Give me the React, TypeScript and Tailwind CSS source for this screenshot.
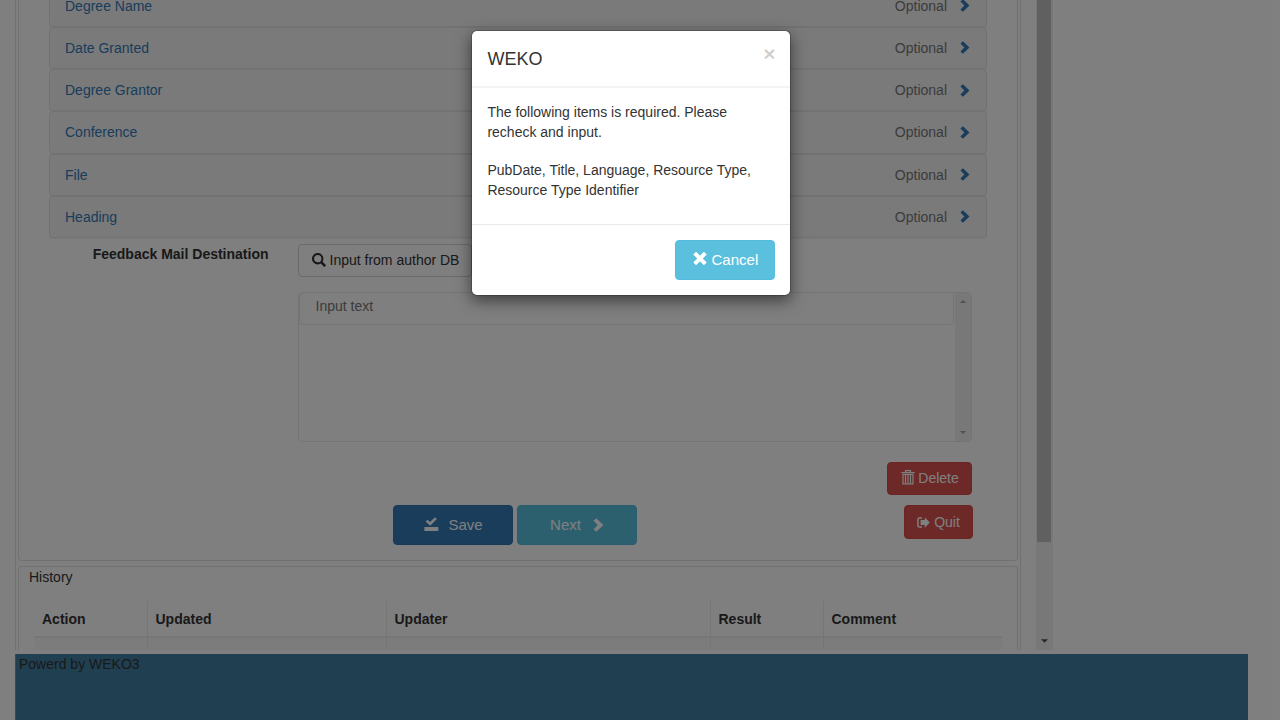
import React from "react";

const fields = ["Degree Name", "Date Granted", "Degree Grantor", "Conference", "File", "Heading"];

const columns = [
  { name: "Action", cell: "w-[113px]" },
  { name: "Updated", cell: "w-[239px]" },
  { name: "Updater", cell: "w-[324px]" },
  { name: "Result", cell: "w-[113px]" },
  { name: "Comment", cell: "flex-1" },
];

function Chevron({ className }: { className: string }) {
  return (
    <svg viewBox="0 0 10 13" fill="currentColor" className={className}>
      <path d="M2.9 0.2 9.5 6.5 2.9 12.8 0.4 10.4 4.4 6.5 0.4 2.6z" />
    </svg>
  );
}

function SearchIcon() {
  return (
    <svg viewBox="0 0 14 14" className="h-3.5 w-3.5" fill="none" stroke="currentColor">
      <circle cx="5.7" cy="5.7" r="4.7" strokeWidth="2.1" />
      <path d="M9.2 9.2l4 4" strokeWidth="2.6" />
    </svg>
  );
}

function TrashIcon() {
  return (
    <svg viewBox="0 0 14 15" className="mb-px h-[15px] w-3.5" fill="none" stroke="currentColor">
      <path d="M4.5 2V.6h5V2" strokeWidth="1.1" />
      <path d="M.3 2.6h13.4" strokeWidth="1.2" />
      <path d="M2 4v9.8h10V4M1.5 4.4h11" strokeWidth="1.2" />
      <path d="M4.5 5v8M7 5v8M9.5 5v8" strokeWidth="1.2" />
    </svg>
  );
}

function QuitIcon() {
  return (
    <svg viewBox="0 0 13 11" className="h-[11px] w-[13px]">
      <path d="M5 1H2.4Q.9 1 .9 2.5v6Q.9 10 2.4 10H5" fill="none" stroke="currentColor" strokeWidth="1.5" />
      <path d="M3.6 3.1h4.2V.2l5 5.3-5 5.3V7.9H3.6z" fill="currentColor" />
    </svg>
  );
}

function SaveIcon() {
  return (
    <svg viewBox="0 0 15 14" className="mb-[2px] h-3.5 w-[15px]" fill="currentColor">
      <path d="M1.6 4.6 3.5 2.7 6 5.1 10.9.2 12.8 2.1 6.2 8.7z" />
      <path d="M.4 10h13.9v4H.4z" />
    </svg>
  );
}

function CrossIcon() {
  return (
    <svg viewBox="0 0 14 13" className="mb-[3px] h-[13px] w-3.5" fill="none" stroke="currentColor">
      <path d="M1.7 1.2l10.6 10.6M12.3 1.2 1.7 11.8" strokeWidth="4" />
    </svg>
  );
}

function Arrow({ down, className }: { down?: boolean; className: string }) {
  return (
    <svg viewBox="0 0 8 4" fill="currentColor" className={className}>
      <path d={down ? "M0 0h8L4 4z" : "M0 4h8L4 0z"} />
    </svg>
  );
}

function ItemForm() {
  return (
    <section className="flow-root h-[561px] rounded-b border border-t-0 border-[#e3e3e3]">
      <div className="mr-[30px] ml-[30px] -mt-[15.5px]">
        {fields.map((name) => (
          <div
            key={name}
            className="flex h-[42.25px] items-center rounded border border-[#e5e5e5] bg-[#f5f5f5] pr-4 pl-[15px] shadow-[0_1px_1px_rgba(0,0,0,0.05)]"
          >
            <span className="flex-1 text-[#337ab7]">{name}</span>
            <span className="mr-[13px] text-[#777]">Optional</span>
            <Chevron className="h-[13px] w-[10px] text-[#337ab7]" />
          </div>
        ))}
      </div>

      <div className="mt-[6px] flex">
        <div className="w-[249.5px] text-right font-bold">Feedback Mail Destination</div>
        <div className="ml-[29.5px] w-[674px]">
          <button className="flex h-[33px] w-[174px] items-center gap-1 rounded border border-[#d4d4d4] pb-[2px] pl-[12.5px]">
            <SearchIcon />
            Input from author DB
          </button>
          <div className="mt-[15px] flex h-[150px] rounded border border-[#e9e9e9]">
            <div className="flex-1">
              <div className="mr-px h-[32px] rounded border border-t-0 border-[#e9e9e9] pt-[3px] pl-[15.5px] text-[#777]">
                Input text
              </div>
            </div>
            <div className="flex w-[16px] flex-col items-center justify-between bg-[#f0f0f0] py-[7px] text-[#a0a0a0]">
              <Arrow className="h-[3px] w-[6px]" />
              <Arrow down className="h-[3px] w-[6px]" />
            </div>
          </div>
        </div>
      </div>

      <div className="mt-5 flex justify-end pr-[45px]">
        <button className="flex h-[33px] w-[85px] items-center justify-center gap-[3px] rounded border border-[#d64a45] bg-[#d9534f] pb-px pl-px text-white">
          <TrashIcon />
          Delete
        </button>
      </div>
      <div className="mt-[10px] flex items-start pr-[44px] pl-[374px]">
        <button className="flex h-10 w-[120px] items-center justify-center gap-[9px] rounded border border-[#3174ae] bg-[#337ab7] pl-px text-[15px] text-white">
          <SaveIcon />
          Save
        </button>
        <button className="ml-1 flex h-10 w-[120px] items-center justify-center gap-[12px] rounded border border-[#50bcdc] bg-[#5bc0de] text-[15px] text-white">
          Next
          <Chevron className="mb-px h-[14px] w-[11px]" />
        </button>
        <button className="ml-auto flex h-[34px] w-[69px] items-center justify-center gap-1 rounded border border-[#d64a45] bg-[#d9534f] text-white">
          <QuitIcon />
          Quit
        </button>
      </div>
    </section>
  );
}

function History() {
  return (
    <section className="mt-[5px] h-[120px] rounded-t border border-b-0 border-[#e3e3e3]">
      <h2 className="pl-[10px]">History</h2>
      <div className="mt-[14px] mr-[15px] ml-[15px]">
        <div className="flex h-[35px] font-bold">
          {columns.map((c, i) => (
            <div key={c.name} className={`${c.cell} pt-2 ${i ? "border-l border-[#ededed] pl-[7.5px]" : "pl-2"}`}>
              {c.name}
            </div>
          ))}
        </div>
        <div className="flex h-10 border-t-2 border-[#eee] bg-[#f9f9f9]">
          {columns.map((c, i) => (
            <div key={c.name} className={`${c.cell} ${i ? "border-l border-[#ededed]" : ""}`} />
          ))}
        </div>
      </div>
    </section>
  );
}

function Modal() {
  return (
    <div className="absolute inset-0 flex items-start bg-black/50 pt-[30px] pl-[471.4px]">
      <div
        role="dialog"
        className="h-[266px] w-80 rounded-[6px] border border-black/20 bg-white bg-clip-padding shadow-[0_5px_15px_rgba(0,0,0,0.5)]"
      >
        <div className="flex h-[57px] items-start justify-between border-b-2 border-[#f3f3f3] px-[15px]">
          <h4 className="mt-[16px] text-lg leading-[25px]">WEKO</h4>
          <button aria-label="Close" className="mt-[12px] text-[21px] leading-[21px] font-bold text-black/20">
            ×
          </button>
        </div>
        <div className="h-[137px] border-b border-[#e9e9e9] px-[15px] pt-[14px]">
          <p>
            The following items is required. Please
            <br />
            recheck and input.
          </p>
          <p className="mt-[18px]">
            PubDate, Title, Language, Resource Type,
            <br />
            Resource Type Identifier
          </p>
        </div>
        <div className="flex justify-end px-[15px] pt-[15px]">
          <button className="flex h-10 w-[100px] items-center justify-center gap-[5px] rounded border border-[#53bcdc] bg-[#5bc0de] text-[15px] text-white">
            <CrossIcon />
            Cancel
          </button>
        </div>
      </div>
    </div>
  );
}

export default function App() {
  return (
    <div className="relative h-[720px] w-[1280px] overflow-hidden bg-white font-['Liberation_Sans',Arial,sans-serif] text-sm leading-5 text-[#333]">
      <div className="flex h-[650px] overflow-hidden pl-[15px]">
        <main className="w-[1006px] border-x border-[#e3e3e3] px-[2px]">
          <ItemForm />
          <History />
        </main>
        <div className="ml-[15px] flex w-[17px] flex-col items-center justify-between bg-[#f1f1f1] pb-[7px] text-[#505050]">
          <div className="ml-px h-[542px] w-[14px] self-start bg-[#c1c1c1]" />
          <Arrow down className="h-[4px] w-[7px]" />
        </div>
      </div>
      <footer className="mt-1 mr-8 ml-[15px] h-[66px] border-l border-[#5b9cc0] bg-[#4080a2] pl-[3px]">
        Powerd by WEKO3
      </footer>
      <Modal />
    </div>
  );
}
